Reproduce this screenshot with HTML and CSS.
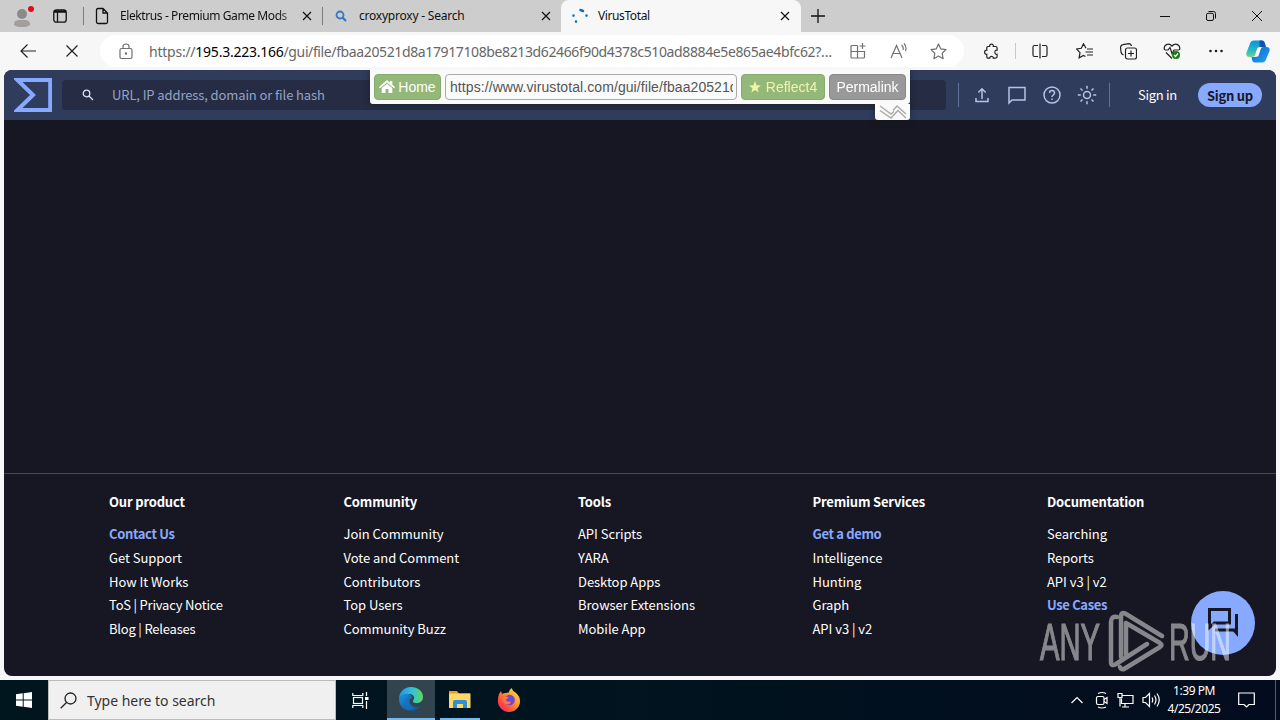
FILE: index.html
```html
<!DOCTYPE html>
<html lang="en">
<head>
<meta charset="utf-8">
<title>VirusTotal</title>
<link rel="stylesheet" href="styles.css">
</head>
<body>
<div class="desktop">
  <div class="tabstrip">
    <div class="strip-start">
      <svg class="profile" width="22" height="26" viewBox="0 0 22 26"><circle cx="10" cy="13" r="5" fill="#8c8a88"/><path d="M2 24c0-5 3-5 8-5s8 0 8 5q-8 5-16 0z" fill="#a19e9b"/><circle cx="19" cy="8" r="3" fill="#e00b1c"/></svg>
      <svg width="14" height="14" viewBox="0 0 14 14" fill="none" stroke="#111" stroke-width="1.3"><rect x=".8" y=".8" width="12.4" height="12.4" rx="2.5"/><path d="M1 2.500h12" stroke-width="2.500"/><path d="M4.500 3v10"/></svg>
    </div>
    <div class="tab tab-first">
      <svg class="fav" width="14" height="18" viewBox="0 0 14 18" fill="none" stroke="#111" stroke-width="1.3"><path d="M8 1.5H3Q1.500 1.500 1.500 3v12q0 1.500 1.500 1.500h8q1.500 0 1.500-1.500V6zv4.500h4.500"/></svg>
      <span class="tab-title fade t-elektrus">Elektrus - Premium Game Mods</span>
      <svg class="close" viewBox="0 0 10 10"><path d="M1 1l8 8M9 1l-8 8"/></svg>
    </div>
    <div class="tab tab-second">
      <svg class="fav" width="14" height="14" viewBox="0 0 14 14" fill="none" stroke="#3278c2" stroke-width="1.8"><circle cx="6" cy="6" r="3.500"/><path d="M8.500 8.500l3.500 3.500" stroke-width="2.200"/></svg>
      <span class="tab-title t-croxy">croxyproxy - Search</span>
      <svg class="close" viewBox="0 0 10 10"><path d="M1 1l8 8M9 1l-8 8"/></svg>
    </div>
    <div class="tab tab-active">
      <svg class="fav" width="18" height="18" viewBox="0 0 18 18" fill="none" stroke="#1c6db5" stroke-width="2.600" stroke-linecap="round"><path d="M9.500 3l2.500 1M15.500 8.500v.1M2.500 8.500v.1M5 14.500v.1"/></svg>
      <span class="tab-title t-vt">VirusTotal</span>
      <svg class="close" viewBox="0 0 10 10"><path d="M1 1l8 8M9 1l-8 8"/></svg>
    </div>
    <div class="new-tab"><svg width="14" height="14" viewBox="0 0 14 14" stroke="#111" stroke-width="1.300"><path d="M7 0v14M0 7h14"/></svg></div>
    <div class="window-buttons">
      <svg viewBox="0 0 10 10"><path d="M0 5.500h10"/></svg>
      <svg viewBox="0 0 10 10"><rect x=".5" y="2.300" width="7" height="7.200" rx="1.500"/><path d="M2.500.5h5q2 0 2 2v5"/></svg>
      <svg viewBox="0 0 10 10"><path d="M0 0l10 10M10 0L0 10"/></svg>
    </div>
  </div>

  <div class="toolbar">
    <div class="slot"><svg width="16" height="14" viewBox="0 0 16 14"><path d="M16 7H1M7.500.5L1 7l6.500 6.500"/></svg></div>
    <div class="slot"><svg width="12" height="12" viewBox="0 0 12 12"><path d="M.5.5l11 11M11.500.5l-11 11"/></svg></div>
    <div class="address">
      <svg class="lock" width="14" height="17" viewBox="0 0 14 17"><rect x="1" y="5.500" width="12" height="10" rx="1.500"/><path d="M4 5.500V3.500q0-2.500 3-2.500t3 2.500v2"/><circle cx="7" cy="10.500" r=".6" fill="#666"/></svg>
      <span class="url">https://<b>195.3.223.166</b><span class="path">/gui/file/fbaa20521d8a17917108be8213d62466f90d4378c510ad8884e5e865ae4bfc62?…</span></span>
      <div class="slot-a"><svg width="16" height="16" viewBox="0 0 16 16"><path d="M7.500 2.500H2q-1 0-1 1v10.500q0 1 1 1h11.500q1 0 1-1V8.500H1M7.500 2.500V15M12.500 0v6M9.500 3h6"/></svg></div>
      <div class="slot-a"><svg width="17" height="16" viewBox="0 0 17 16"><path d="M1 15L6.500 2.500 12 15M3 10.500h7M11.500 2q2.500 2 1.500 5M14 .5q3 3 1.500 7.500"/></svg></div>
      <div class="slot-a"><svg width="17" height="17" viewBox="0 0 17 17"><path d="M8.500 1l2.300 4.900 5.200.7-3.800 3.700.9 5.400-4.600-2.600-4.600 2.600.9-5.400L1 6.600l5.200-.7z" stroke-linejoin="round"/></svg></div>
    </div>
    <div class="slot slot-ext"><svg width="16" height="17" viewBox="0 0 16 17"><path d="M3 4.500q0-1 1-1h1.800C5.500.2 10 .2 9.500 3.500h2.200q1.600 0 1.600 1.500v2.200c-3-.6-3 4.700 0 4.100v2.300q0 1.500-1.600 1.500H9.500c.4-2.200-3.900-2.200-3.500 0H4.400Q3 15.100 3 13.700v-2.400c-3 .4-3-4.500 0-4.100z" transform="translate(.8 0)"/></svg></div>
    <span class="tool-divider"></span>
    <div class="slot"><svg width="16" height="16" viewBox="0 0 16 16"><path d="M6 2.500H2.500Q1 2.500 1 4v8q0 1.500 1.500 1.500H6M10 2.500h3.500Q15 2.500 15 4v8q0 1.500-1.500 1.500H10M8 .5v15"/></svg></div>
    <div class="slot"><svg width="17" height="16" viewBox="0 0 17 16"><path d="M10 5.200L7.500.8 5.300 5.300.5 6l3.500 3.600-.9 5.200 4.300-2.300 2 1M11 6h6M9.500 9h7.500M11 12h6"/></svg></div>
    <div class="slot"><svg width="17" height="17" viewBox="0 0 17 17"><path d="M3.500 12Q1 11 1 8.500l-.5-4Q.7 2 3 1.700l6-1q2 0 2.500 2.300"/><rect x="5.500" y="5" width="11" height="11" rx="2"/><path d="M11 7.500v6M8 10.500h6"/></svg></div>
    <div class="slot"><svg width="18" height="17" viewBox="0 0 18 17"><path d="M1.500 7C0 2 5.500-1 9 3c3.500-4 9-1 7.500 4M2 7h3l2-2.500 2 6L11 7h5M3 9.500l6 6"/><circle cx="13" cy="12" r="4" fill="#167c18" stroke="none"/><path d="M11 12l1.500 1.500 2.500-3" stroke="#fff"/></svg></div>
    <div class="slot"><svg width="14" height="4" viewBox="0 0 14 4"><g fill="#222" stroke="none"><circle cx="1.500" cy="2" r="1.300"/><circle cx="7" cy="2" r="1.300"/><circle cx="12.500" cy="2" r="1.300"/></g></svg></div>
    <div class="copilot"><svg width="24" height="23" viewBox="0 0 24 23">
      <defs><linearGradient id="ca" x2="0" y2="1"><stop stop-color="#0794dc"/><stop offset=".6" stop-color="#2bb8c6"/><stop offset="1" stop-color="#6fd58a"/></linearGradient><linearGradient id="cb" x2="1" y2="1"><stop stop-color="#1262d0"/><stop offset="1" stop-color="#21a6ee"/></linearGradient></defs>
      <path d="M8 .5h8q3 0 2.500 3L17.500 7h-4q-2 0-2.700 2.500L9 15q-.6 2-3 2H3.500Q-.5 17 .5 12.500L4 3.500Q5 .5 8 .5z" fill="url(#ca)"/>
      <path d="M13.500.5H16q2 0 3 3l1 3.500h-6.500z" fill="#164fac"/>
      <path d="M18 7h2.500Q24.500 7 23.500 11l-3.500 8.500q-1 3-4 3H9q-2.500 0-3-3L5.500 17H9q2 0 2.700-2l2.100-6Q14.500 7 18 7z" fill="url(#cb)"/><path d="M13 7h2.500l-3.300 9.500H9q1 0 1.500-2z" fill="#fff"/></svg></div>
  </div>

  <div class="page">
    <header class="vt-header">
      <svg class="vt-logo" width="38" height="34" viewBox="0 0 38 34"><path d="M3.500 2h32.700v30H3.500L19 17z" fill="none" stroke="#87a9ff" stroke-width="4"/></svg>
      <div class="vt-search">
        <svg width="12" height="12" viewBox="0 0 12 12" fill="none" stroke="#dce4f5" stroke-width="1.300"><circle cx="4.500" cy="4.500" r="3.300"/><path d="M7 7l4 4"/></svg>
        <span>URL, IP address, domain or file hash</span>
      </div>
      <span class="vt-divider"></span>
      <div class="vt-icons">
        <svg width="20" height="20" viewBox="0 0 20 20"><path d="M4 13v3.500h12V13M10 14V4M6.300 7.500L10 3.800l3.700 3.700"/></svg>
        <svg width="20" height="20" viewBox="0 0 20 20"><path d="M2 2.500h16v12.500H5L2 18z"/></svg>
        <svg width="20" height="20" viewBox="0 0 20 20"><circle cx="10" cy="10" r="8"/><path d="M7.500 8c0-3.500 5-3.500 5 0 0 2-2.500 2-2.500 4M10 13.500v1.500"/></svg>
        <svg width="20" height="20" viewBox="0 0 20 20"><circle cx="10" cy="10" r="3.500"/><path d="M10 .8v3M10 16.200v3M.8 10h3M16.200 10h3M3.500 3.500l2 2M14.500 14.500l2 2M3.500 16.500l2-2M14.500 5.500l2-2"/></svg>
      </div>
      <span class="vt-divider"></span>
      <span class="sign-in">Sign in</span>
      <span class="sign-up">Sign up</span>
    </header>

    <main class="vt-main"></main>

    <footer class="vt-footer">
      <div class="col"><h4>Our product</h4><a class="hot">Contact Us</a><a>Get Support</a><a>How It Works</a><a class="piped">ToS | Privacy Notice</a><a class="piped">Blog | Releases</a></div>
      <div class="col"><h4>Community</h4><a>Join Community</a><a>Vote and Comment</a><a>Contributors</a><a>Top Users</a><a>Community Buzz</a></div>
      <div class="col"><h4>Tools</h4><a>API Scripts</a><a>YARA</a><a>Desktop Apps</a><a>Browser Extensions</a><a>Mobile App</a></div>
      <div class="col"><h4>Premium Services</h4><a class="hot">Get a demo</a><a>Intelligence</a><a>Hunting</a><a>Graph</a><a>API v3 | v2</a></div>
      <div class="col"><h4>Documentation</h4><a>Searching</a><a>Reports</a><a>API v3 | v2</a><a class="hot">Use Cases</a></div>
    </footer>

    <div class="proxy">
      <div class="proxy-bar">
        <span class="pbtn green home"><svg width="16" height="14" viewBox="0 0 16 14" fill="#fff"><path d="M8 0l3 2.600V1h2.300v3.700L16 7l-1 1.200L8 2.400 1 8.200 0 7z"/><path d="M8 3.700l5.300 4.400V13H9.500V9h-3v4H2.700V8.100z"/></svg>Home</span>
        <span class="proxy-url"><span>https://www.virustotal.com/gui/file/fbaa20521d</span></span>
        <span class="pbtn green reflect"><svg width="12" height="12" viewBox="0 0 12 12"><path d="M6 0l1.500 4.200L12 4.400 8.500 7.200 9.700 11.500 6 9l-3.700 2.500 1.200-4.300L0 4.400l4.500-.2z" fill="#f3f3a0"/></svg>Reflect4</span>
        <span class="pbtn gray">Permalink</span>
      </div>
      <div class="proxy-toggle"><svg width="28" height="14" viewBox="0 0 28 14" fill="none" stroke="#aaa" stroke-width="1.400"><path d="M1 1l11 8 3-2.500M1 5.500l11 7.500L19 5.500l8 7.500M14 5.500L18 1l9 8"/></svg></div>
    </div>

    <div class="chat"><svg width="32" height="32" viewBox="0 0 32 32" fill="none" stroke="#171724" stroke-width="3"><path d="M2.500 2.500h20v13.500H7.500l-5 4.500z"/><path d="M29.500 7V23M8 23h21"/><path d="M25 23h6v7z" fill="#171724" stroke="none"/></svg></div>
    <svg class="watermark" width="204" height="64" viewBox="0 0 204 64">
      <g fill="#fff" stroke="#fff" stroke-width="1.200" font-family="Liberation Sans, sans-serif" font-size="51"><text x="2" y="51" textLength="60" lengthAdjust="spacingAndGlyphs">ANY</text><text x="131" y="51" textLength="62" lengthAdjust="spacingAndGlyphs">RUN</text></g>
      <path fill="none" stroke="#fff" stroke-width="4.500" stroke-linejoin="round" stroke-linecap="round" d="M79 8q-6-1-6 5v40q0 5 5 2l31-20M83 48V8q0-6 5-3l36 22M88 14l34 20q3 2 0 4L86 60q-3 1-4-2M88 14v32"/>
    </svg>
  </div>

  <div class="taskbar">
    <div class="start"><svg width="16" height="16" viewBox="0 0 16 16" fill="#fff"><path d="M0 2.300L6.700 1.300v6.200H0zM7.700 1.200L16 0v7.500H7.700zM0 8.500h6.700v6.200L0 13.700zM7.700 8.500H16V16l-8.300-1.200z"/></svg></div>
    <div class="search"><svg width="17" height="17" viewBox="0 0 17 17" fill="none" stroke="#222" stroke-width="1.300"><circle cx="10.500" cy="6.500" r="5.500"/><path d="M6.500 10.500L.7 16.300"/></svg><span>Type here to search</span></div>
    <div class="app taskview"><svg width="17" height="17" viewBox="0 0 17 17" fill="none" stroke="#fff" stroke-width="1.200"><path d="M.8 1v2.500h10V1M.8 16v-2.500h10V16M14.500 0v4M14.500 9v8"/><rect x="1.500" y="5.500" width="9" height="6"/><path d="M13 6.500h3.500" stroke-width="3"/></svg></div>
    <div class="app edge"><svg width="24" height="24" viewBox="0 0 24 24">
      <defs><linearGradient id="ea" x2="1"><stop stop-color="#2195e2"/><stop offset=".55" stop-color="#2fc2da"/><stop offset="1" stop-color="#62d957"/></linearGradient><linearGradient id="eb" x2="1" y2="1"><stop stop-color="#1a94df"/><stop offset="1" stop-color="#114a8b"/></linearGradient></defs>
      <path d="M0 12C0 5 5 0 12 0c8 0 12 5.500 12 10 0 4-3 6-6.500 6-4 0-4-1.500-3-3 2-4-1.500-6-4-6C5 7 1 9 0 12z" fill="url(#ea)"/><path d="M0 12C1 8 5 6.500 9 7c2.500.5 4 2 4 3.500-4 1-4 8 4 9.500 2 .2 4-.5 5.500-1.500C20 22 16 24 12 24 5 24 0 19 0 12z" fill="url(#eb)"/><path d="M12.500 9C7 11 8 20 16 21.500L9 23Q2 16 9 9z" fill="#1673bd" opacity=".7"/></svg></div>
    <div class="app explorer"><svg width="22" height="19" viewBox="0 0 22 19"><path d="M0 1h8l2 2.500H21V6H0z" fill="#e8a317"/><path d="M0 3.500h21.500V18H0z" fill="#ffd868"/><path d="M4 18v-6q0-2 2-2h10q2 0 2 2v6h-4v-4H8v4z" fill="#2d91d5"/></svg></div>
    <div class="app firefox"><svg width="24" height="24" viewBox="0 0 24 24"><defs><linearGradient id="fa" x1="1" x2="0" y2="1"><stop stop-color="#fff25a"/><stop offset=".4" stop-color="#ff9a27"/><stop offset=".75" stop-color="#ff4047"/><stop offset="1" stop-color="#e31587"/></linearGradient></defs><path d="M2 6l2-3 1 3q2-1.500 4-1 2-1 2.500 0Q12 2 14.500 0q1 3 4 4.500 4.500 3.500 4.500 9C23 19 18 24 12 24S.8 19 .8 13Q.8 9 2 6z" fill="url(#fa)"/><circle cx="12.500" cy="12" r="5.300" fill="#7045dc"/><path d="M6 9q3-2 6 1-3 .5-3 2.500 2 2 5 .8Q13 18 8 15.500 5 13 6 9z" fill="#ff7b34"/></svg></div>
    <div class="tray">
      <svg width="14" height="8" viewBox="0 0 14 8"><path d="M1.500 7L7 1.500 12.500 7"/></svg>
      <svg width="14" height="18" viewBox="0 0 14 18"><rect x="1.500" y="5.500" width="7.500" height="8" rx="1.500"/><path d="M9 8.500l3-2v6l-3-2M3 2.500q4-2 8 0M3 16q4 2 8 0"/></svg>
      <svg width="17" height="16" viewBox="0 0 17 16"><path d="M5 3.500h11v8H4.500v-5M8 11.500v3.500M5 15h7M1 1.500h4v4H1zM3 5.500v9"/></svg>
      <svg width="18" height="16" viewBox="0 0 18 16"><path d="M1 5.500h2.500l4-4v13l-4-4H1zM10 5.500q1.500 2.500 0 5M12.500 3.500q3 4.500 0 9M15 1.500q4.500 6.500 0 13"/></svg>
      <div class="clock"><span>1:39 PM</span><span>4/25/2025</span></div>
      <svg width="17" height="17" viewBox="0 0 17 17"><path d="M.7 1h15.600v11.500H11L8.500 15 6 12.500H.7z"/></svg>
      <span class="show-desktop"></span>
    </div>
  </div>
</div>
</body>
</html>
```
FILE: styles.css
```css
* { box-sizing: border-box; }
body { margin: 0; font-family: "Noto Sans", sans-serif; }
svg { display: block; flex: none; }
.desktop { width: 1280px; height: 720px; overflow: hidden; display: flex; flex-direction: column; background: #f7f7f7; }

.tabstrip { height: 32px; flex: none; display: flex; background: #cdcdcd; }
.strip-start { width: 83px; display: flex; align-items: center; padding-left: 12px; gap: 19px; }
.profile { margin-top: -5px; }
.tab { display: flex; align-items: center; height: 32px; }
.tab::before { width: 1px; height: 18px; background: #7d7d7d; }
.tab-first { width: 240px; padding: 0 11px 0 0; }
.tab-first::before { content: ""; margin-right: 11px; }
.tab-first .fav { margin-right: 11px; }
.tab-second { width: 238px; padding: 0 10px 0 0; }
.tab-second::before { content: ""; margin-left: -1px; }
.tab-second .fav { margin: 0 11px 0 11px; }
.tab-active { width: 240px; background: #f7f7f7; border-radius: 8px 8px 0 0; padding: 0 11px 0 10px; }
.tab-active .fav { margin-right: 9px; }
.tab-title { font-size: 12px; color: #111; white-space: nowrap; line-height: 16px; }
.fade { width: 174px; -webkit-mask-image: linear-gradient(90deg, #000 90%, #0006); mask-image: linear-gradient(90deg, #000 90%, #0006); }
.t-elektrus { letter-spacing: -.4px; }
.t-croxy { letter-spacing: -.22px; }
.t-vt { letter-spacing: -.4px; }
.close { width: 10px; height: 10px; margin-left: auto; fill: none; stroke: #111; stroke-width: 1.200; }
.new-tab { width: 34px; display: flex; align-items: center; justify-content: center; }
.window-buttons { margin-left: auto; display: flex; align-items: center; gap: 36px; padding-right: 18px; }
.window-buttons svg { width: 10px; height: 10px; fill: none; stroke: #111; overflow: visible; }

.toolbar { height: 38px; flex: none; display: flex; align-items: center; padding-left: 6px; background: #f7f7f7; }
.toolbar svg { fill: none; stroke: #222; stroke-width: 1.200; }
.slot { width: 44px; flex: none; display: flex; justify-content: center; }
.address { width: 864px; height: 32px; flex: none; margin-left: 6px; border-radius: 16px; background: #fff; display: flex; align-items: center; padding-left: 19px; }
.address svg { stroke: #707070; }
.url { width: 705px; flex: none; padding-left: 16px; font-size: 14px; color: #666; white-space: nowrap; letter-spacing: -.24px; }
.url b { font-weight: 400; color: #000; }
.path { letter-spacing: -.38px; }
.slot-a { width: 40px; flex: none; display: flex; justify-content: center; }
.slot-ext { margin-left: 5px; }
.tool-divider { width: 1px; height: 16px; background: #c8c8c8; margin: 0 2px; }
.copilot { width: 40px; display: flex; justify-content: center; }
.copilot svg { stroke: none; }

.page { width: 1272px; height: 606px; margin-left: 4px; flex: none; position: relative; border-radius: 8px; background: #171723; display: flex; flex-direction: column; overflow: hidden; font-family: "Noto Sans CJK SC", sans-serif; }
.vt-header { height: 50px; flex: none; background: #2f3c5c; display: flex; align-items: center; padding-left: 10px; }
.vt-search { width: 884px; height: 30px; margin-left: 10px; border-radius: 4px; background: #252c43; display: flex; align-items: center; padding-left: 20px; gap: 18px; font-size: 13px; color: #95a3c8; letter-spacing: -.11px; }
.vt-search span { padding-bottom: 2px; }
.vt-divider { width: 1px; height: 24px; background: #60729b; margin-left: 12px; }
.vt-icons { display: flex; gap: 15px; margin-left: 13px; }
.vt-icons svg { fill: none; stroke: #b3c3e8; stroke-width: 1.500; }
.vt-icons + .vt-divider { margin-left: 12px; }
.sign-in { width: 60px; margin-left: 28px; padding-bottom: 2px; color: #fff; font-size: 13px; letter-spacing: -.3px; }
.sign-up { width: 64px; height: 24px; line-height: 26px; border-radius: 12px; background: #87a9ff; color: #171723; font-size: 13px; font-weight: 700; text-align: center; letter-spacing: -.25px; }
.vt-main { height: 353px; flex: none; }
.vt-footer { flex: 1; border-top: 1px solid #484855; display: grid; grid-template-columns: repeat(5, 234.500px); padding: 16px 0 0 105px; color: #fff; font-size: 13px; }
.col { display: flex; flex-direction: column; }
.col h4 { margin: 0 0 8px; font-size: 13px; line-height: 24px; font-weight: 700; letter-spacing: -.18px; }
.col a { line-height: 23.800px; white-space: nowrap; letter-spacing: -.04px; }
.col .hot { color: #87a9ff; font-weight: 700; letter-spacing: -.35px; }
.col .piped { letter-spacing: -.2px; }

.proxy { position: absolute; left: 366px; top: 0; width: 540px; display: flex; flex-direction: column; align-items: flex-end; font: 14px "Liberation Sans", sans-serif; filter: drop-shadow(0 0 3px #1118); }
.proxy-bar { width: 540px; height: 34px; background: #fafafa; border-radius: 0 0 3px 3px; display: flex; padding: 4px; gap: 4px; }
.pbtn { height: 26px; border-radius: 4px; color: #fff; display: flex; align-items: center; justify-content: center; }
.green { background: #93b879; border: 1px solid #84ac6b; }
.home { width: 67px; gap: 3px; }
.reflect { width: 84px; gap: 5px; color: #f3f3b0; }
.gray { width: 77px; background: #999; border: 1px solid #888; }
.proxy-url { width: 292px; height: 26px; border: 1px solid #aaa; border-radius: 4px; padding: 0 4px; line-height: 24px; color: #555; white-space: nowrap; }
.proxy-url span { display: block; width: 283px; overflow: hidden; letter-spacing: .08px; }
.proxy-toggle { width: 35px; height: 16px; background: #fafafa; border-radius: 0 0 3px 3px; display: flex; justify-content: center; padding-top: 1px; }

.chat { position: absolute; left: 1187px; top: 521px; width: 64px; height: 64px; border-radius: 50%; background: #87a9ff; display: flex; align-items: center; justify-content: center; }
.watermark { position: absolute; left: 1034px; top: 539px; opacity: .48; }

.taskbar { height: 40px; margin-top: 4px; flex: none; display: flex; background: linear-gradient(90deg, #00161f 0%, #00141f 45%, #030c1e 100%); }
.start { width: 48px; display: flex; align-items: center; justify-content: center; }
.search { width: 288px; background: #f0f0f0; border: 1px solid #bbb; display: flex; align-items: center; padding-left: 11px; gap: 10px; font-size: 14px; color: #333; letter-spacing: -.03px; }
.app { display: flex; align-items: center; justify-content: center; width: 48px; }
.taskview { margin-left: 1px; width: 50px; padding-right: 4px; }
.edge { background: #32444e; border-bottom: 2px solid #76b9ed; }
.explorer { width: 40px; margin-left: 5px; border-bottom: 2px solid #76b9ed; }
.firefox { margin-left: 5px; }
.tray { margin-left: auto; display: flex; align-items: center; gap: 8px; }
.tray svg { fill: none; stroke: #fff; stroke-width: 1.200; }
.tray > svg:first-child { margin-right: 3px; }
.clock { width: 54px; margin-left: -1px; display: flex; flex-direction: column; align-items: center; color: #fff; font-size: 12px; line-height: 18px; letter-spacing: -.45px; white-space: nowrap; }
.clock + svg { margin-left: 9px; }
.show-desktop { width: 5px; height: 40px; margin-left: 12px; border-left: 1px solid #56606c; }
```
